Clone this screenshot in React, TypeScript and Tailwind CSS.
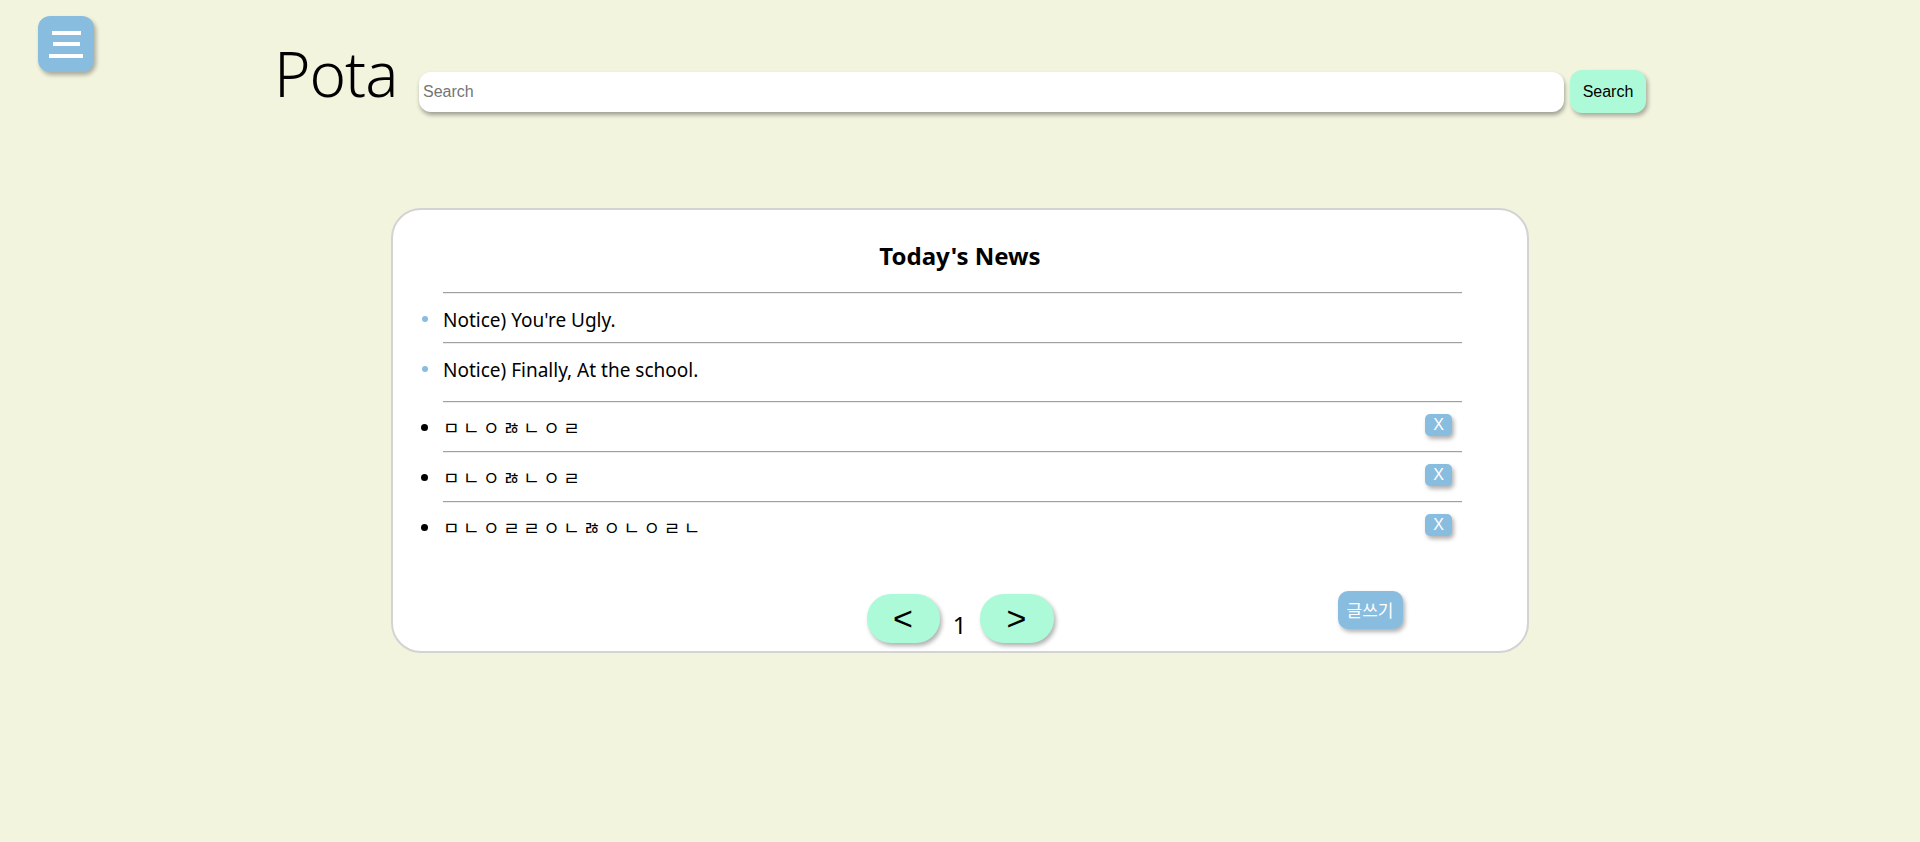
import React from "react";

const NOTICES = ["Notice) You're Ugly.", "Notice) Finally, At the school."];

const POSTS = ["ㅁㄴㅇㅀㄴㅇㄹ", "ㅁㄴㅇㅀㄴㅇㄹ", "ㅁㄴㅇㄹㄹㅇㄴㅀㅇㄴㅇㄹㄴ"];

function Rule() {
  return <div className="ml-[32px] h-[2px] border-t border-t-[#a0a0a0] border-b border-b-[#ececec]" />;
}

function MenuButton() {
  return (
    <button className="fixed left-[38px] top-[16px] w-[56px] h-[56px] rounded-[12px] bg-[#88bde0] shadow-[2px_3px_4px_rgba(0,0,0,0.3)]">
      <svg width="56" height="56" viewBox="0 0 56 56">
        <rect x="14" y="15" width="29" height="4" fill="#fff" />
        <rect x="15" y="26" width="27" height="4" fill="#fff" />
        <rect x="11" y="38" width="34" height="4" fill="#fff" />
      </svg>
    </button>
  );
}

export default function App() {
  return (
    <div className="min-h-screen w-full bg-[#f2f4de] font-['Noto_Sans','Noto_Sans_CJK_KR',sans-serif] text-black">
      <MenuButton />

      {/* header: logo + search */}
      <div className="w-[1372px] mx-auto pt-[41px] flex items-start">
        <div className="w-[145px] text-[62px] leading-[64px] font-light tracking-[-1px]">Pota</div>
        <input
          placeholder="Search"
          className="mt-[31px] w-[1145px] h-[40px] rounded-[12px] bg-white pl-[4px] text-[16px] font-['Liberation_Sans',sans-serif] placeholder:text-[#757575] outline-none shadow-[1px_3px_4px_rgba(0,0,0,0.35)]"
        />
        <button className="ml-[6px] mt-[29px] w-[76px] h-[43px] rounded-[12px] bg-[#adfad8] text-[16px] font-['Liberation_Sans',sans-serif] shadow-[2px_3px_4px_rgba(0,0,0,0.3)]">
          Search
        </button>
      </div>

      {/* news card */}
      <div className="mt-[95px] mx-auto w-[1138px] h-[445px] bg-white border-2 border-[#d3d3d3] rounded-[30px] pt-[31px] flex flex-col">
        <h1 className="text-center text-[24px] leading-[30px] font-bold">Today's News</h1>

        <div className="mt-[21px] ml-[18px] w-[1051px] flex flex-col">
          {NOTICES.map((n) => (
            <div key={n} className="flex flex-col">
              <Rule />
              <div className="h-[48px] flex items-center">
                <div className="w-[32px] flex pt-[2px]">
                  <span className="ml-[11px] w-[6px] h-[6px] rounded-full bg-[#88bde0]" />
                </div>
                <span className="text-[19px] leading-[24px] pt-[3px]">{n}</span>
              </div>
            </div>
          ))}
        </div>

        <div className="mt-[9px] ml-[18px] w-[1051px] flex flex-col">
          {POSTS.map((p, i) => (
            <div key={i} className="flex flex-col">
              <Rule />
              <div className="h-[48px] flex items-center">
                <div className="w-[32px] flex">
                  <span className="ml-[10px] w-[7px] h-[7px] rounded-full bg-black" />
                </div>
                <span className="flex-1 text-[18px] leading-[24px] tracking-[3.5px] font-['Noto_Sans_CJK_KR',sans-serif]">{p}</span>
                <button className="mr-[10px] mb-[5px] w-[27px] h-[22px] rounded-[5px] bg-[#88bde0] text-white text-[16px] leading-[22px] font-['Liberation_Sans',sans-serif] shadow-[2px_3px_4px_rgba(0,0,0,0.3)]">
                  X
                </button>
              </div>
            </div>
          ))}
        </div>

        {/* pagination + write */}
        <div className="mt-[40px] grid grid-cols-[1fr_auto_1fr] items-start">
          <div />
          <div className="flex items-start">
            <button className="mt-[3px] w-[73px] h-[49px] rounded-[24px] bg-[#adfad8] text-[34px] leading-[49px] font-['Liberation_Sans',sans-serif] shadow-[2px_3px_4px_rgba(0,0,0,0.3)]">
              &lt;
            </button>
            <span className="mt-[19px] w-[40px] text-center text-[24px] leading-[30px] text-black">1</span>
            <button className="mt-[3px] w-[74px] h-[49px] rounded-[24px] bg-[#adfad8] text-[34px] leading-[49px] font-['Liberation_Sans',sans-serif] shadow-[2px_3px_4px_rgba(0,0,0,0.3)]">
              &gt;
            </button>
          </div>
          <div className="pl-[284px]">
            <button className="w-[65px] h-[38px] rounded-[10px] bg-[#88bde0] text-white text-[17px] leading-[38px] font-['Noto_Sans_CJK_KR',sans-serif] shadow-[2px_3px_4px_rgba(0,0,0,0.3)]">
              글쓰기
            </button>
          </div>
        </div>
      </div>
    </div>
  );
}
